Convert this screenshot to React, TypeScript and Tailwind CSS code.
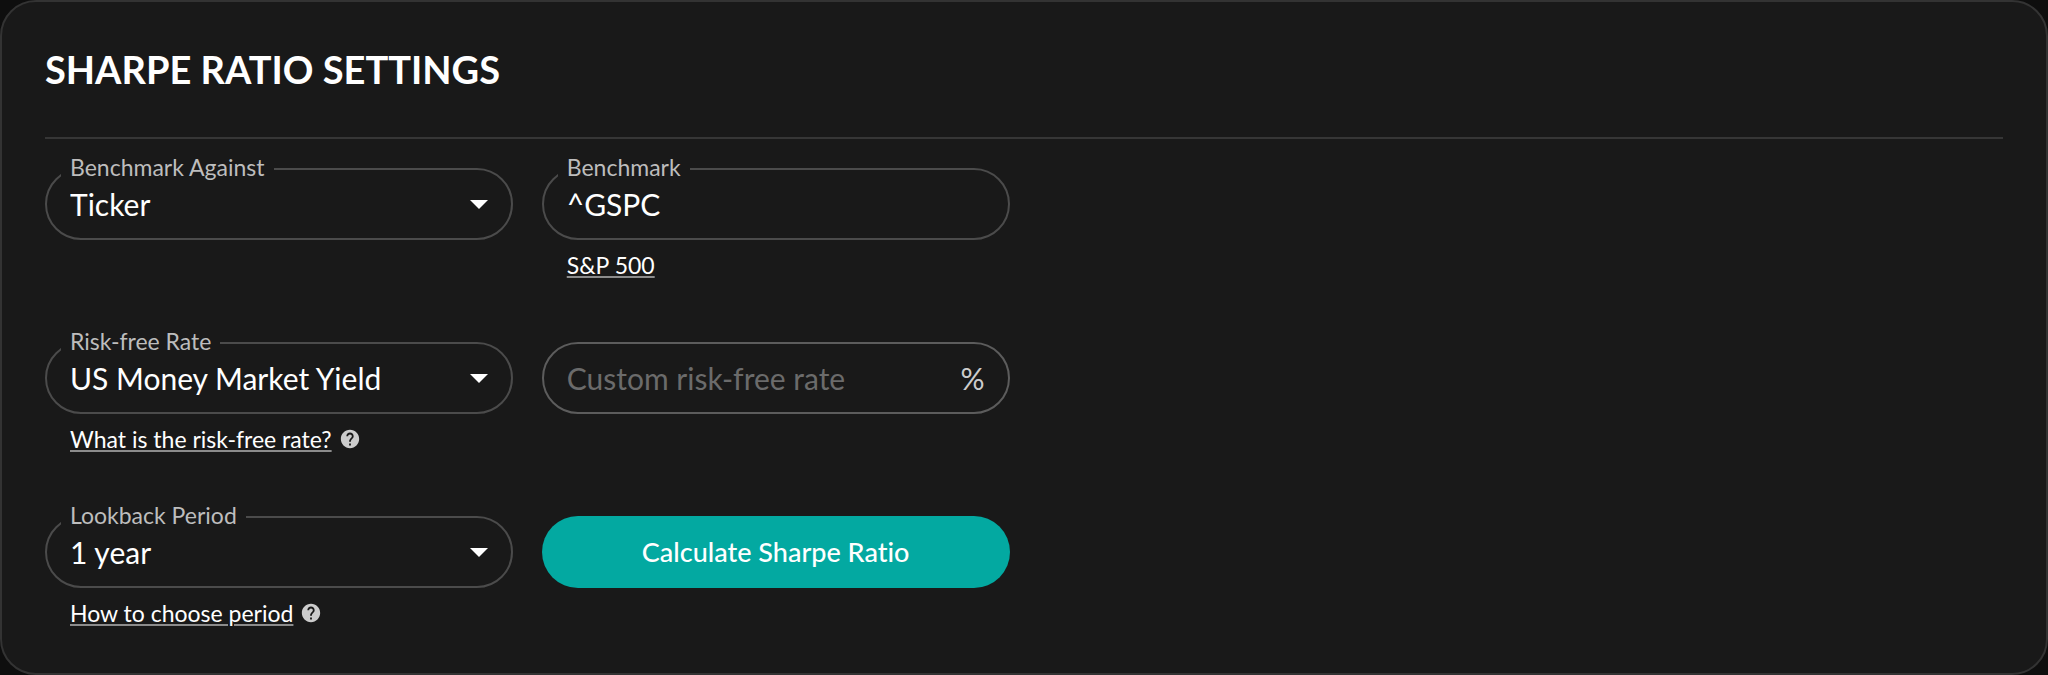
import type { ReactNode } from "react"
import { MdHelp } from "react-icons/md"

type FieldProps = {
    id: string
    label?: string
    children: ReactNode
    helper?: ReactNode
}

const Field = ({ id, label, children, helper }: FieldProps) => {
    return (
        <div className="flex flex-col gap-[11px]">
            <div className="relative">
                {children}
                {label && (
                    <label htmlFor={id} className="absolute -top-[13px] left-4 bg-[#191919] px-[9px] text-[23px] leading-6 text-[#bdbdbd]">
                        {label}
                    </label>
                )}
            </div>
            {helper && <div className="flex h-7 items-center gap-[7px] px-[25px]">{helper}</div>}
        </div>
    )
}

type SelectFieldProps = {
    id: string
    label: string
    options: string[]
    helper?: ReactNode
}

const SelectField = ({ id, label, options, helper }: SelectFieldProps) => {
    return (
        <Field id={id} label={label} helper={helper}>
            <select
                id={id}
                className="block h-[72px] w-full appearance-none rounded-full border-2 border-[#4b4b4b] bg-transparent px-[23px] text-[30px] text-white outline-none"
            >
                {options.map((option) => (
                    <option key={option} className="bg-[#191919]">{option}</option>
                ))}
            </select>
            <svg viewBox="0 0 18 9" className="pointer-events-none absolute top-8 right-[25px] h-[9px] w-[18px] fill-white" aria-hidden="true">
                <path d="M0 0h18L9 9z" />
            </svg>
        </Field>
    )
}

const HelperLink = ({ children }: { children: ReactNode }) => {
    return (
        <a href="#" className="text-[23px] leading-7 text-white underline decoration-[#8c8c8c] decoration-2 underline-offset-2">
            {children}
        </a>
    )
}

const HelpButton = ({ label }: { label: string }) => {
    return (
        <button type="button" aria-label={label} className="text-[#cccccc]">
            <MdHelp className="size-[22px]" />
        </button>
    )
}

const App = () => {
    return (
        <main className="bg-[#0e0e0e] font-['Lato',sans-serif] [font-variant-ligatures:none]">
            <section className="rounded-[36px] border-2 border-[#333333] bg-[#191919] px-[43px] pt-[43px] pb-[46px]">
                <h1 className="text-[38px] leading-[48px] font-bold text-white">SHARPE RATIO SETTINGS</h1>
                <hr className="mt-11 border-t-2 border-[#363636]" />

                <form className="mt-[29px] grid grid-cols-2 gap-x-[29px] gap-y-[63px] xl:grid-cols-4" onSubmit={(e) => e.preventDefault()}>
                    <div className="xl:col-start-1">
                        <SelectField id="benchmark-against" label="Benchmark Against" options={["Ticker", "Portfolio"]} />
                    </div>
                    <Field id="benchmark" label="Benchmark" helper={<HelperLink>S&amp;P 500</HelperLink>}>
                        <input
                            id="benchmark"
                            type="text"
                            defaultValue="^GSPC"
                            className="block h-[72px] w-full rounded-full border-2 border-[#4b4b4b] bg-transparent px-[23px] text-[30px] text-white outline-none"
                        />
                    </Field>

                    <div className="xl:col-start-1">
                        <SelectField
                            id="risk-free-rate"
                            label="Risk-free Rate"
                            options={["US Money Market Yield", "Custom"]}
                            helper={
                                <>
                                    <HelperLink>What is the risk-free rate?</HelperLink>
                                    <HelpButton label="About the risk-free rate" />
                                </>
                            }
                        />
                    </div>
                    <Field id="custom-rate">
                        <div className="flex h-[72px] items-center rounded-full border-2 border-[#5c5c5c] px-[23px] text-[30px]">
                            <input
                                id="custom-rate"
                                type="text"
                                aria-label="Custom risk-free rate"
                                placeholder="Custom risk-free rate"
                                className="min-w-0 flex-1 bg-transparent text-white outline-none placeholder:text-[#6b6b6b]"
                            />
                            <span className="text-[#cccccc]">%</span>
                        </div>
                    </Field>

                    <div className="xl:col-start-1">
                        <SelectField
                            id="lookback-period"
                            label="Lookback Period"
                            options={["1 year", "3 years", "5 years"]}
                            helper={
                                <>
                                    <HelperLink>How to choose period</HelperLink>
                                    <HelpButton label="About the lookback period" />
                                </>
                            }
                        />
                    </div>
                    <button type="submit" className="h-[72px] rounded-full bg-[#03a9a1] text-[27px] font-medium text-white">
                        Calculate Sharpe Ratio
                    </button>
                </form>
            </section>
        </main>
    )
}

export default App
